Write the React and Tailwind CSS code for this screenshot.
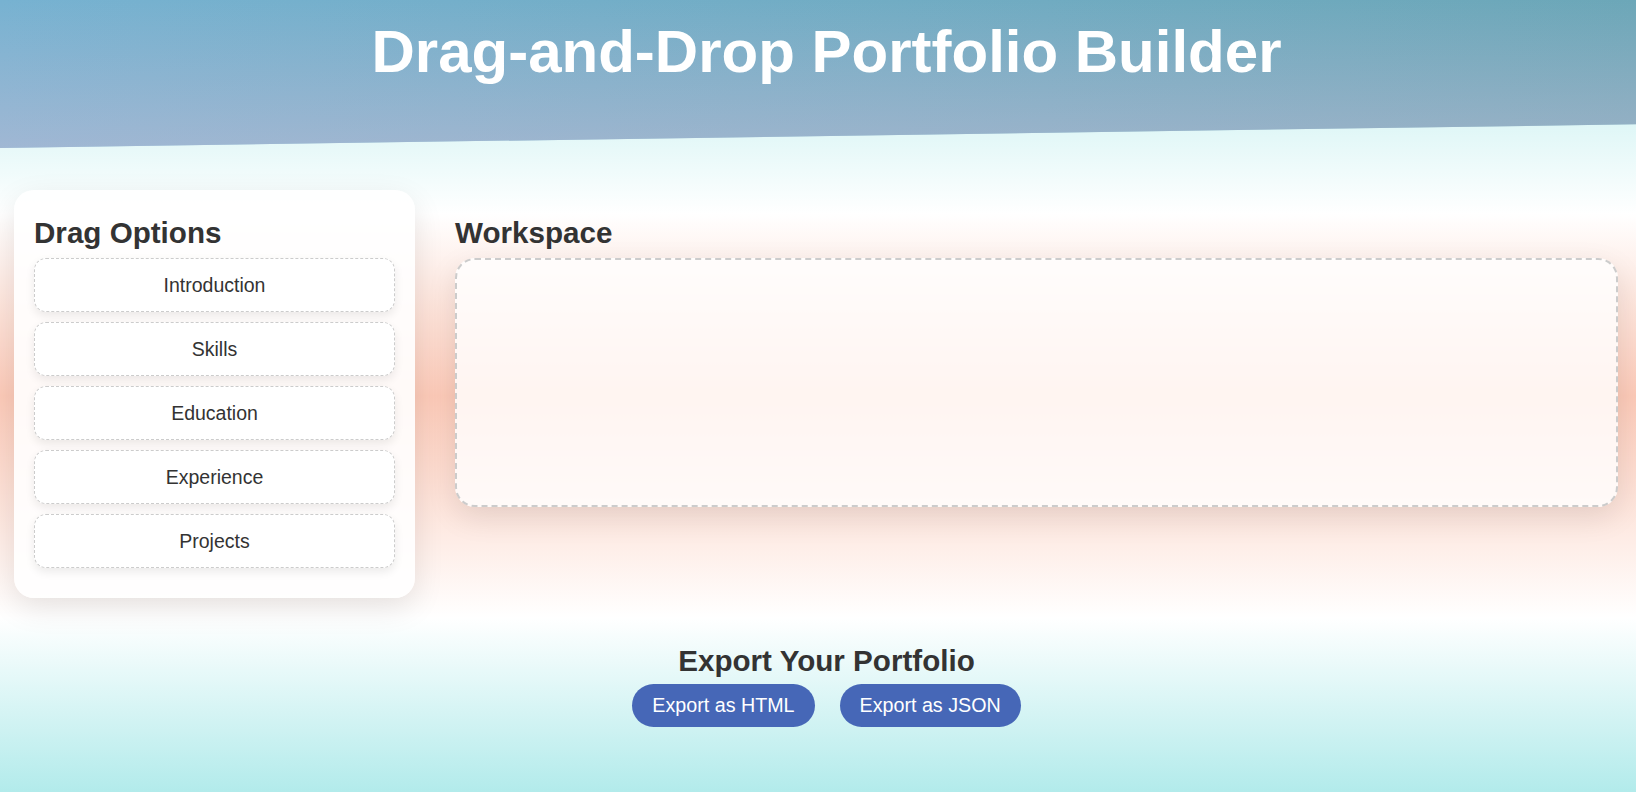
import { useState } from 'react'

const OPTIONS = ['Introduction', 'Skills', 'Education', 'Experience', 'Projects']

export default function App() {
    const [sections, setSections] = useState([])

    // drop a dragged option into the workspace
    const handleDrop = (e) => {
        e.preventDefault()
        const name = e.dataTransfer.getData('text/plain')
        if (name) setSections((prev) => [...prev, name])
    }

    return (
        <div className="min-h-screen font-['Liberation_Sans',Arial,sans-serif] text-[#333] bg-[linear-gradient(to_bottom,#b2ebeb_0%,#ffffff_27%,#fccab8_50%,#ffffff_78%,#b2ebeb_100%)]">
            <header className="h-[148px] pl-[17px] pt-[6.6px] text-center [clip-path:polygon(0_0,100%_0,100%_84%,0_100%)] bg-[linear-gradient(to_bottom,rgba(210,190,215,0)_0%,rgba(210,190,215,0.45)_100%),linear-gradient(to_right,#77b2d1,#6ca7b8)]">
                <h1 className="text-[60px] font-bold leading-normal text-white">Drag-and-Drop Portfolio Builder</h1>
            </header>

            <main className="flex items-start gap-[40px] pl-[14px] pr-[18px] pt-[42px]">
                {/* Options panel */}
                <aside className="w-[401px] shrink-0 rounded-[20px] bg-white/90 p-[20px] shadow-[0_10px_30px_rgba(0,0,0,0.1)]">
                    <h2 className="mt-[1px] mb-[3px] text-[29.6px] font-bold leading-normal">Drag Options</h2>
                    <div className="flex flex-col gap-[10px] pb-[10px]">
                        {OPTIONS.map((opt) => (
                            <div
                                key={opt}
                                draggable
                                onDragStart={(e) => e.dataTransfer.setData('text/plain', opt)}
                                className="cursor-grab rounded-[12px] border border-dashed border-[#ccc] bg-white/90 py-[15px] text-center text-[19.5px] leading-[22px] shadow-[0_4px_10px_rgba(0,0,0,0.08)]"
                            >
                                {opt}
                            </div>
                        ))}
                    </div>
                </aside>

                {/* Workspace */}
                <section className="flex-1 pt-[20px]">
                    <h2 className="mt-[1px] mb-[3px] text-[29.6px] font-bold leading-normal">Workspace</h2>
                    <div
                        onDragOver={(e) => e.preventDefault()}
                        onDrop={handleDrop}
                        className="h-[249px] rounded-[20px] border-2 border-dashed border-[#ccc] bg-white/80 p-[20px] shadow-[0_10px_30px_rgba(0,0,0,0.1)]"
                    >
                        {sections.map((s, idx) => (
                            <div key={idx} className="mb-[10px] rounded-[12px] bg-white p-[15px] text-[19.5px]">{s}</div>
                        ))}
                    </div>
                </section>
            </main>

            <section className="pl-[17px] pt-[40px] text-center">
                <h2 className="mt-[1px] text-[29.6px] font-bold leading-normal">Export Your Portfolio</h2>
                <div className="flex justify-center gap-[25px]">
                    <button className="rounded-full bg-[#4667b7] px-[20px] py-[10px] text-[19.7px] leading-[23px] text-white">Export as HTML</button>
                    <button className="rounded-full bg-[#4667b7] px-[20px] py-[10px] text-[19.7px] leading-[23px] text-white">Export as JSON</button>
                </div>
            </section>
        </div>
    )
}
